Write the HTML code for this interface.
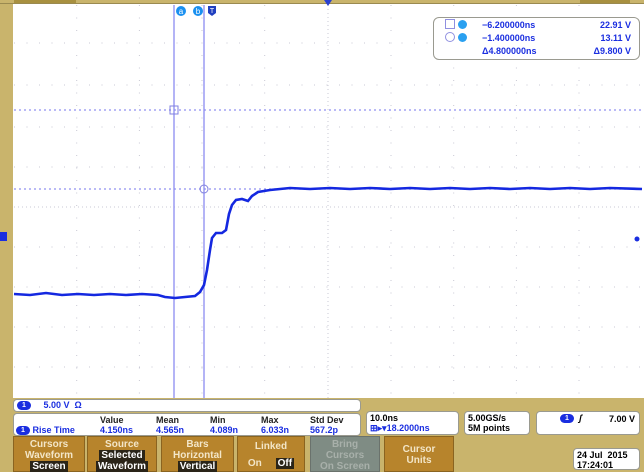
<!DOCTYPE html>
<html><head><style>
body{margin:0;width:644px;height:472px;overflow:hidden;background:#c9b46c;font-family:"Liberation Sans",sans-serif;position:relative}
.a{position:absolute}
.box{position:absolute;background:#fff;border:1.5px solid #9a9a90;border-radius:4px;box-sizing:border-box}
.btn{position:absolute;top:436px;height:36px;background:#b7842c;border:1px solid #8a6420;box-sizing:border-box;color:#f3e6c8;font-size:10px;text-align:center;line-height:11px;padding-top:2px;font-weight:bold}
.sel{background:#2a2418;color:#fff;padding:0 2px}
.blue{color:#1a2ee0}
.dot{display:inline-block;background:#1a2ee0;color:#fff;border-radius:6px;width:14px;height:9px;font-size:7px;line-height:9px;text-align:center;vertical-align:middle}
.b{font-weight:bold}
</style></head><body>
<div class="a" style="left:13px;top:4px;width:631px;height:394px;background:#fff"></div>
<div class="a" style="left:0;top:0;width:644px;height:4px;background:#c9b46c;border-bottom:1px solid #9a8a50;box-sizing:border-box"></div>
<div class="a" style="left:14px;top:0;width:62px;height:3px;background:#a89040"></div>
<div class="a" style="left:580px;top:0;width:50px;height:3px;background:#a89040"></div>
<svg class="a" style="left:0;top:0" width="644" height="400">
<g stroke="#c8c8d4" stroke-width="1" stroke-dasharray="1 11.5">
<line x1="76.7" y1="5" x2="76.7" y2="398"/><line x1="139.4" y1="5" x2="139.4" y2="398"/><line x1="202" y1="5" x2="202" y2="398"/><line x1="264.7" y1="5" x2="264.7" y2="398"/><line x1="391" y1="5" x2="391" y2="398"/><line x1="453.7" y1="5" x2="453.7" y2="398"/><line x1="516.4" y1="5" x2="516.4" y2="398"/><line x1="579" y1="5" x2="579" y2="398"/>
<line x1="14" y1="43" x2="642" y2="43"/><line x1="14" y1="85" x2="642" y2="85"/><line x1="14" y1="127" x2="642" y2="127"/><line x1="14" y1="167" x2="642" y2="167"/><line x1="14" y1="247" x2="642" y2="247"/><line x1="14" y1="287" x2="642" y2="287"/><line x1="14" y1="327" x2="642" y2="327"/><line x1="14" y1="367" x2="642" y2="367"/>
</g>
<line x1="328" y1="5" x2="328" y2="398" stroke="#c8c8d4" stroke-dasharray="1 3"/>
<line x1="14" y1="207" x2="642" y2="207" stroke="#c8c8d4" stroke-dasharray="1 3"/>
<line x1="14" y1="110" x2="642" y2="110" stroke="#9090f0" stroke-dasharray="2 3" stroke-width="1.3"/>
<line x1="14" y1="189" x2="642" y2="189" stroke="#9090f0" stroke-dasharray="2 3" stroke-width="1.3"/>
<line x1="174" y1="5" x2="174" y2="398" stroke="#8c8cf0" stroke-width="1.3"/>
<line x1="204" y1="5" x2="204" y2="398" stroke="#8c8cf0" stroke-width="1.3"/>
<rect x="170" y="106" width="8" height="8" fill="none" stroke="#8080e0"/>
<circle cx="204" cy="189" r="4" fill="none" stroke="#8080e0"/>
<polyline fill="none" stroke="#1428e0" stroke-width="2.6" points="14,294 30,295 46,293 62,295 78,294 94,295 110,294 126,295 142,294 158,295 165,297 175,298 185,297 195,296 200,292 204,285 207,270 210,250 212,238 216,233 222,233 226,230 229,214 232,205 236,200 242,199 248,201 252,196 258,192 270,190 290,188 310,189 330,188 350,189 370,188 390,189 410,188 430,189 450,188 470,189 490,188 510,189 530,188 550,189 570,188 590,189 610,188 642,189"/>
<circle cx="181" cy="11" r="5" fill="#1a90f0"/><text x="181" y="14" font-size="8" fill="#fff" text-anchor="middle">a</text>
<circle cx="198" cy="11" r="5" fill="#1a90f0"/><text x="198" y="14" font-size="8" fill="#fff" text-anchor="middle">b</text>
<path d="M208 6h8v7l-4 3-4-3z" fill="#2040c0"/><text x="212" y="13" font-size="7" fill="#fff" text-anchor="middle">T</text>
<path d="M324 0h8l-4 6z" fill="#2a40d0"/>
<path d="M0 232h7v9h-7z" fill="#1a2ee0"/>
<circle cx="637" cy="239" r="2.5" fill="#1a2ee0"/>
</svg>
<div class="box" style="left:433px;top:17px;width:207px;height:43px;border-radius:6px"></div>
<div class="a blue b" style="left:445px;top:19px;font-size:9px;line-height:12px;width:190px">
<div><span style="display:inline-block;width:8px;height:8px;border:1px solid #9090e0"></span> <span style="display:inline-block;width:9px;height:9px;border-radius:5px;background:#2aa0f0"></span><span style="position:absolute;left:37px">−6.200000ns</span><span style="position:absolute;right:4px">22.91 V</span></div>
<div><span style="display:inline-block;width:8px;height:8px;border:1px solid #9090e0;border-radius:5px"></span> <span style="display:inline-block;width:9px;height:9px;border-radius:5px;background:#2aa0f0"></span><span style="position:absolute;left:37px">−1.400000ns</span><span style="position:absolute;right:4px">13.11 V</span></div>
<div style="position:relative;height:12px"><span style="position:absolute;left:37px">Δ4.800000ns</span><span style="position:absolute;right:4px">Δ9.800 V</span></div>
</div>
<div class="box b" style="left:13px;top:399px;width:348px;height:13px;font-size:9px;line-height:10px;padding-left:3px" ><span class="dot">1</span> <span class="blue" style="margin-left:10px">5.00 V &nbsp;Ω</span></div>
<div class="box b" style="left:13px;top:413px;width:348px;height:23px;font-size:9px;line-height:10px">
<div class="a" style="top:1px;left:86px;color:#222">Value</div><div class="a" style="top:1px;left:142px;color:#222">Mean</div><div class="a" style="top:1px;left:196px;color:#222">Min</div><div class="a" style="top:1px;left:247px;color:#222">Max</div><div class="a" style="top:1px;left:296px;color:#222">Std Dev</div>
<div class="a blue" style="top:11px;left:2px"><span class="dot">1</span> Rise Time</div>
<div class="a blue" style="top:11px;left:86px">4.150ns</div><div class="a blue" style="top:11px;left:142px">4.565n</div><div class="a blue" style="top:11px;left:196px">4.089n</div><div class="a blue" style="top:11px;left:247px">6.033n</div><div class="a blue" style="top:11px;left:296px">567.2p</div>
</div>
<div class="box b" style="left:366px;top:411px;width:93px;height:24px;font-size:9px;line-height:10px;padding:1px 3px">10.0ns<br><span class="blue">⊞▸▾18.2000ns</span></div>
<div class="box b" style="left:464px;top:411px;width:66px;height:24px;font-size:9px;line-height:10px;padding:1px 3px">5.00GS/s<br>5M points</div>
<div class="box b" style="left:536px;top:411px;width:104px;height:24px;font-size:9px;line-height:10px;padding:1px 3px"><span class="dot" style="margin-left:20px">1</span> &nbsp;<i>ʃ</i><span style="position:absolute;right:4px;top:2px">7.00 V</span></div>
<div class="btn" style="left:13px;width:72px">Cursors<br>Waveform<br><span class="sel">Screen</span></div>
<div class="btn" style="left:87px;width:70px">Source<br><span class="sel">Selected</span><br><span class="sel">Waveform</span></div>
<div class="btn" style="left:161px;width:73px">Bars<br>Horizontal<br><span class="sel">Vertical</span></div>
<div class="btn" style="left:237px;width:68px;padding-top:4px">Linked<br><div style="margin-top:6px">On &nbsp;&nbsp;&nbsp;&nbsp;<span class="sel">Off</span></div></div>
<div class="btn" style="left:310px;width:70px;background:#7f8c84;border-color:#6a726c;color:#a8b0aa">Bring<br>Cursors<br>On Screen</div>
<div class="btn" style="left:384px;width:70px;padding-top:7px">Cursor<br>Units</div>
<div class="box b" style="left:573px;top:448px;width:67px;height:22px;background:#fff;font-size:9px;line-height:10px;padding:1px 3px">24 Jul &nbsp;2015<br>17:24:01</div>
</body></html>
